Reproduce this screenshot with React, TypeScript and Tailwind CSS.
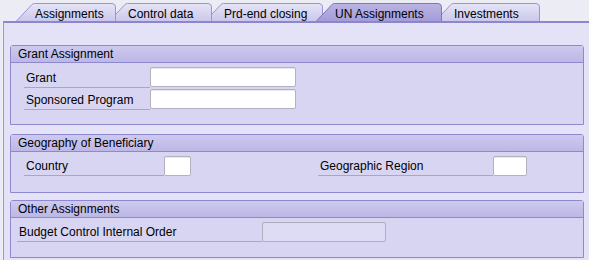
import React from "react";

const FONT = { fontFamily: '"Liberation Sans", Arial, sans-serif' };

type TabProps = { label: string; width: number; active?: boolean; z: number };

function Tab({ label, width, active, z }: TabProps) {
  const h = 19;
  const s = 17;
  const path = `M0.5,${h} L${s},1.5 Q${s + 1},0.5 ${s + 2.5},0.5 L${width - 4},0.5 Q${width - 0.5},0.5 ${width - 0.5},4 L${width - 0.5},${h}`;
  const gid = active ? "gActive" : "gTab";
  return (
    <div
      className="relative shrink-0 h-[19px] -ml-[8px] first:ml-0"
      style={{ width, zIndex: z }}
    >
      <svg className="absolute inset-0" width={width} height={h} viewBox={`0 0 ${width} ${h}`}>
        <path d={path + " Z"} fill={`url(#${gid})`} stroke="none" />
        <path d={path} fill="none" stroke={active ? "#7d76c2" : "#9a94d2"} strokeWidth="1" />
      </svg>
      <span
        className="absolute top-[4px] text-[12px] leading-[14px] text-black whitespace-nowrap"
        style={{ left: s + 3 }}
      >
        {label}
      </span>
    </div>
  );
}

function LabelCell({ text, width, ml }: { text: string; width: number; ml: number }) {
  return (
    <div
      className="h-full border-b border-[#a9a7bb] flex items-center pl-[2px] text-[12px] text-black shrink-0"
      style={{ width, marginLeft: ml }}
    >
      <span className="mt-[2px]">{text}</span>
    </div>
  );
}

function Input({ width, disabled }: { width: number; disabled?: boolean }) {
  return (
    <div
      className={
        "h-[20px] rounded-[2px] border shrink-0 " +
        (disabled
          ? "bg-[#dedcf5] border-[#aeacbe]"
          : "bg-white border-[#b3b1c0] shadow-[inset_0_1px_0_#e8e8ee]")
      }
      style={{ width }}
    />
  );
}

function Group({ title, children, className }: { title: string; children: React.ReactNode; className?: string }) {
  return (
    <div className={"w-[574px] border border-[#8e88cf] rounded-t-[3px] bg-[#d8d5f3] " + (className || "")}>
      <div className="h-[17px] border-b border-[#8e88cf] bg-gradient-to-b from-[#cdc9ee] to-[#bdb7e6] pl-[7px] text-[12px] leading-[16px] text-black">
        {title}
      </div>
      {children}
    </div>
  );
}

export default function App() {
  return (
    <div className="w-[589px] h-[260px] bg-[#ececf4] overflow-hidden" style={FONT}>
      <svg width="0" height="0" className="absolute">
        <defs>
          <linearGradient id="gTab" x1="0" y1="0" x2="0" y2="1">
            <stop offset="0" stopColor="#e6e5f6" />
            <stop offset="1" stopColor="#c9c6ea" />
          </linearGradient>
          <linearGradient id="gActive" x1="0" y1="0" x2="0" y2="1">
            <stop offset="0" stopColor="#bbb4e3" />
            <stop offset="1" stopColor="#a39bd6" />
          </linearGradient>
        </defs>
      </svg>
      <div className="flex pt-[3px] pl-[15px] h-[21px]">
        <Tab label="Assignments" width={101} z={5} />
        <Tab label="Control data" width={104} z={4} />
        <Tab label="Prd-end closing" width={119} z={3} />
        <Tab label="UN Assignments" width={127} z={10} active />
        <Tab label="Investments" width={106} z={1} />
      </div>
      <div className="relative z-20 ml-[3px] border-t-2 border-l border-[#8c86cc] border-l-[#9c97cf] bg-[#e4e2f6] h-[240px] pl-[6px] pt-[22px]">
        <Group title="Grant Assignment">
          <div className="pt-[3px] pb-[14px]">
            <div className="flex h-[22px] items-start">
              <LabelCell text="Grant" width={126} ml={13} />
              <div className="pt-[1px]"><Input width={146} /></div>
            </div>
            <div className="flex h-[22px] items-start">
              <LabelCell text="Sponsored Program" width={126} ml={13} />
              <div className="pt-[1px]"><Input width={146} /></div>
            </div>
          </div>
        </Group>
        <Group title="Geography of Beneficiary" className="mt-[9px]">
          <div className="pt-[3px] pb-[16px]">
            <div className="flex h-[21px] items-start">
              <LabelCell text="Country" width={140} ml={13} />
              <div className="pt-[1px]"><Input width={27} /></div>
              <LabelCell text="Geographic Region" width={175} ml={127} />
              <div className="pt-[1px]"><Input width={34} /></div>
            </div>
          </div>
        </Group>
        <Group title="Other Assignments" className="mt-[7px]">
          <div className="pt-[3px] pb-[15px]">
            <div className="flex h-[21px] items-start">
              <LabelCell text="Budget Control Internal Order" width={245} ml={6} />
              <div className="pt-[1px]"><Input width={124} disabled /></div>
            </div>
          </div>
        </Group>
      </div>
    </div>
  );
}
